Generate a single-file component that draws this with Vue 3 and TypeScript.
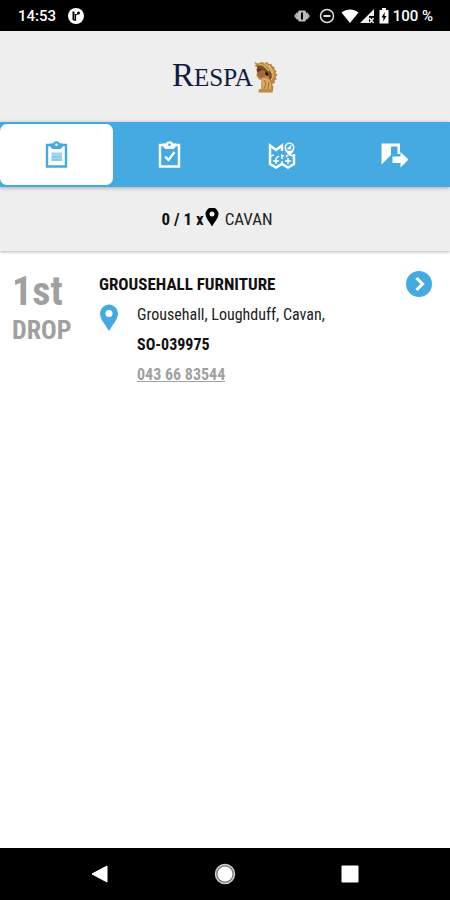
<script setup lang="ts">
import { ref } from 'vue'

type TabId = 'pending' | 'done' | 'map' | 'exit'

interface Drop {
  order: string
  customer: string
  address: string
  reference: string
  phone: string
}

const tabs: { id: TabId; label: string }[] = [
  { id: 'pending', label: 'Pending drops' },
  { id: 'done', label: 'Completed drops' },
  { id: 'map', label: 'Route map' },
  { id: 'exit', label: 'Sign out' },
]

const activeTab = ref<TabId>('pending')

const drops: Drop[] = [
  {
    order: '1st',
    customer: 'GROUSEHALL FURNITURE',
    address: 'Grousehall, Loughduff, Cavan,',
    reference: 'SO-039975',
    phone: '043 66 83544',
  },
]
</script>

<template>
  <div class="screen">
    <div class="status-bar">
      <div class="status-left">
        <span>14:53</span>
        <svg width="16" height="16" viewBox="0 0 16 16" aria-hidden="true">
          <circle cx="8" cy="8" r="8" fill="#fff" />
          <path d="M5.500 3.500v8.500" stroke="#000" stroke-width="2" fill="none" />
          <path d="M5.500 12.200h2V6.500h2" stroke="#000" stroke-width="1.200" fill="none" />
          <circle cx="10.500" cy="5" r="1.500" fill="#000" />
        </svg>
      </div>
      <div class="status-right">
        <svg width="16" height="16" viewBox="0 0 16 16" aria-hidden="true">
          <path d="M0 8 3 4v8zM16 8l-3-4v8z" fill="#aaa" />
          <path d="M5 2.500h6l2 3v5l-2 3H5l-2-3v-5z" fill="#bbb" />
          <path d="M8 4.500v7" stroke="#000" stroke-width="2" />
        </svg>
        <svg class="dnd" width="16" height="16" viewBox="0 0 16 16" aria-hidden="true">
          <circle cx="8" cy="8" r="6.500" fill="none" stroke="#ddd" stroke-width="1.500" />
          <path d="M4.500 8h7" stroke="#ddd" stroke-width="2" />
        </svg>
        <svg class="wifi" width="18" height="16" viewBox="0 0 18 16" aria-hidden="true">
          <path d="M.5 4.500C5.500.4 12.500.4 17.500 4.500L9 15z" fill="#fff" />
        </svg>
        <svg width="16" height="16" viewBox="0 0 16 16" aria-hidden="true">
          <path d="M15 1v7h-5v7H1z" fill="#eee" />
          <path d="m10.500 10 4 5m0-5-4 5" stroke="#eee" stroke-width="1.500" />
        </svg>
        <svg class="battery" width="10" height="16" viewBox="0 0 10 16" aria-hidden="true">
          <path d="M3 0h4v2h2.500v13.500h-9V2H3z" fill="#fff" />
          <path d="M5.800 4 2.500 9.500h2L4.200 13.500 7.500 8h-2z" fill="#000" />
        </svg>
        <span>100 %</span>
      </div>
    </div>

    <header class="brand">
      <h1><span class="initial">R</span>ESPA</h1>
      <svg width="25" height="32" viewBox="0 0 25 32" aria-hidden="true">
        <path d="M1 1l4 1.500L8 1l4 1 2-1 2 2 2.500 0 .5 2 2.500 1 0 2.500 2 1.500-1 2 2 2-2 2 1.500 2-2.500 1.500.5 2.500-3 1 1.500 3-1 5.500H5.500l1-3 2-1-.5-5 1-3-3.500-1.500L5 17l-1.500-2L4 11 3 8l3-1.500L1 5l2-1z" fill="#b98743" />
        <path d="M4 5l5-1 5 3 4 4 1 6-2 2-2-5-4-4-4-1-3 2z" fill="#765026" />
        <path d="M6 3l5 2 5 5M11 2l5 4 3 6M16 4l4 7M20 9l0 7M21 14l-3 5" stroke="#dfb66e" stroke-width="1.200" fill="none" />
        <path d="M5 10l4-1 3 3 0 3-3 2-3-1-2-3z" fill="#a56a3b" />
        <path d="M8.500 17l5 0 4 3 1 10H8l2-4-2-4z" fill="#d8aa63" />
        <path d="M11 19l2 4-2 5M16 21l-1 7M7 14l3 1" stroke="#9b6c34" stroke-width="1" fill="none" />
        <path d="M12 11l3 1 0 3-2.500-1z" fill="#23170f" />
        <path d="M4 11l2-3 3 0-2 2z" fill="#4b2a18" />
        <path d="M6 28h13v2.500H5.500z" fill="#bf904c" />
      </svg>
    </header>

    <nav class="tabs" aria-label="Sections">
      <button
        v-for="tab in tabs"
        :key="tab.id"
        type="button"
        class="tab"
        :class="{ active: activeTab === tab.id }"
        :aria-label="tab.label"
        :aria-pressed="activeTab === tab.id"
        @click="activeTab = tab.id"
      >
        <svg v-if="tab.id === 'pending' || tab.id === 'done'" width="24" height="28" viewBox="0 0 24 28" aria-hidden="true">
          <path d="M3 4h19v21.500H3z" fill="none" stroke="currentColor" stroke-width="2.400" />
          <path d="M6 2.500h3c1-3 6-3 7 0h3v3L16.500 8h-8L6 5.500z" fill="currentColor" />
          <circle class="clip-hole" cx="12.500" cy="3.800" r="1.300" />
          <g v-if="tab.id === 'pending'">
            <path d="M7.500 11.500H18V20H7.500z" fill="currentColor" opacity=".5" />
            <path d="M7.500 16H18M7.500 19H18" stroke="currentColor" stroke-width="1.200" opacity=".4" />
          </g>
          <path v-else d="m8 15.500 3.500 3.500 6-8" fill="none" stroke="currentColor" stroke-width="2.200" />
        </svg>
        <svg v-else-if="tab.id === 'map'" width="30" height="28" viewBox="0 0 30 28" aria-hidden="true">
          <path d="M16 10V4.500L10 9 4 4.500V23l6 3.500 6-3.500 6 3.500 6-3.500V13" fill="none" stroke="currentColor" stroke-width="2.400" />
          <path d="M5 15l3-1m2 3 3-2m2-1 3 1m2 1 2-2m2 0 3 1M7 20h6M10 17v6M19 20h6M22 17v6M16 15v3M16 20v3" fill="none" stroke="currentColor" stroke-width="1.500" />
          <path d="M23.500 15C20 11.500 18.500 9 18.500 6.500a5 5 0 0 1 10 0c0 2.500-1.500 5-5 8.500z" fill="currentColor" />
          <circle cx="23.500" cy="6.500" r="3.400" fill="#45aae1" />
          <path d="m21.500 8 4-3.500M23 8.500l2-2" fill="none" stroke="currentColor" stroke-width="1.200" />
        </svg>
        <svg v-else width="28" height="28" viewBox="0 0 28 28" aria-hidden="true">
          <path d="M1.500 2.500H20V13h-2.500V5.500H11V14l-9.500 9.500z" fill="currentColor" />
          <path d="M12.500 15.500h8V11l8 7.500-8 8v-4.500h-8z" fill="currentColor" />
        </svg>
      </button>
    </nav>

    <section class="summary">
      <strong>0 / 1 x</strong>
      <svg width="14" height="20" viewBox="0 0 14 20" aria-hidden="true">
        <path fill-rule="evenodd" d="M7 18.500C4 13 .5 10 .5 6a6.500 6.500 0 0 1 13 0C13.500 10 10 13 7 18.500zM7 3.500a2.500 2.500 0 1 0 0 5 2.500 2.500 0 0 0 0-5z" />
      </svg>
      <span>CAVAN</span>
    </section>

    <main>
      <article v-for="drop in drops" :key="drop.reference" class="drop">
        <div class="sequence">
          <div class="order">{{ drop.order }}</div>
          <div class="caption">DROP</div>
        </div>
        <div class="details">
          <h2>{{ drop.customer }}</h2>
          <div class="location">
            <svg width="20" height="28" viewBox="0 0 20 28" aria-hidden="true">
              <path fill="#45aae1" fill-rule="evenodd" d="M10 27C5 19 1 14.500 1 9.500a9 9 0 0 1 18 0c0 5-4 9.500-9 17.500zM10 6a3.500 3.500 0 1 0 0 7 3.500 3.500 0 0 0 0-7z" />
            </svg>
            <div class="lines">
              <p>{{ drop.address }}</p>
              <strong>{{ drop.reference }}</strong>
              <a :href="'tel:' + drop.phone.replace(/ /g, '')">{{ drop.phone }}</a>
            </div>
          </div>
        </div>
        <button type="button" class="open" :aria-label="'Open ' + drop.customer">
          <svg width="26" height="26" viewBox="0 0 26 26" aria-hidden="true">
            <circle cx="13" cy="13" r="13" fill="#45aae1" />
            <path d="m10.500 7 6 6-6 6" fill="none" stroke="#fff" stroke-width="3" />
          </svg>
        </button>
      </article>
    </main>

    <footer class="system-nav">
      <button type="button" aria-label="Back">
        <svg width="22" height="22" viewBox="0 0 22 22" aria-hidden="true"><path d="M18 3v16L3 11z" fill="#fff" stroke="#fff" stroke-linejoin="round" /></svg>
      </button>
      <button type="button" aria-label="Home">
        <svg width="22" height="22" viewBox="0 0 22 22" aria-hidden="true">
          <circle cx="11" cy="11" r="9.500" fill="#777" stroke="#ccc" stroke-width="1.500" />
          <circle cx="11" cy="11" r="7.500" fill="#fff" />
        </svg>
      </button>
      <button type="button" aria-label="Recent apps">
        <svg width="22" height="22" viewBox="0 0 22 22" aria-hidden="true"><rect x="2.500" y="2.500" width="17" height="17" rx="1" fill="#fff" /></svg>
      </button>
    </footer>
  </div>
</template>

<style>
body {
  margin: 0;
}
</style>

<style scoped>
.screen {
  min-height: 100vh;
  display: flex;
  flex-direction: column;
  background: #fff;
  color: #222;
  font-family: "Roboto Condensed", "Liberation Sans Narrow", Roboto, sans-serif;
}

svg {
  display: block;
  flex: none;
}

button {
  padding: 0;
  border: 0;
  background: none;
  cursor: pointer;
}

h1,
h2,
p {
  margin: 0;
}

.status-bar {
  height: 31px;
  padding: 0 17px 0 18px;
  box-sizing: border-box;
  display: flex;
  align-items: center;
  justify-content: space-between;
  background: #000;
  color: #fff;
  font: 500 15px/16px Roboto, sans-serif;
}

.status-left,
.status-right {
  display: flex;
  align-items: center;
}

.status-left {
  gap: 12px;
}

.dnd {
  margin-left: 9px;
}

.wifi {
  margin-left: 6px;
}

.battery {
  margin: 0 4px;
}

.brand {
  height: 91px;
  display: flex;
  align-items: center;
  justify-content: center;
  background: #eee;
}

.brand h1 {
  color: #101b3f;
  font: 400 25px/36px "Liberation Serif", serif;
}

.brand .initial {
  font-size: 33px;
}

.tabs {
  position: relative;
  display: grid;
  grid-template-columns: repeat(4, 1fr);
  padding: 2px 0;
  background: #45aae1;
  box-shadow: 0 1px 4px rgba(0, 0, 0, 0.3);
}

.tab {
  height: 61px;
  display: flex;
  align-items: center;
  justify-content: center;
  border-radius: 7px;
  color: #fff;
}

.tab.active {
  background: #fff;
  color: #45aae1;
}

.clip-hole {
  fill: #45aae1;
}

.tab.active .clip-hole {
  fill: #fff;
}

.summary {
  height: 64px;
  display: flex;
  align-items: center;
  justify-content: center;
  background: #eee;
  box-shadow: 0 1px 3px rgba(0, 0, 0, 0.3);
  font-size: 17px;
  line-height: 20px;
  padding-right: 16px;
}

.summary strong {
  margin-right: 1px;
  color: #111;
}

.summary svg {
  margin-bottom: 2px;
}

.summary span {
  margin-left: 6px;
}

main {
  flex: 1;
}

.drop {
  display: flex;
  align-items: flex-start;
  padding: 20px 18px 12px 12px;
}

.sequence {
  flex: none;
  width: 87px;
  padding-top: 1px;
  color: #a0a0a0;
  font-weight: 700;
}

.order {
  font-size: 40px;
  line-height: 40px;
}

.caption {
  font-size: 26px;
  line-height: 36px;
}

.details {
  flex: 1;
}

h2 {
  color: #111;
  font-size: 17px;
  line-height: 26px;
}

.location {
  display: flex;
  gap: 18px;
  padding-top: 3px;
}

.location svg {
  margin-top: 4px;
}

.lines {
  display: flex;
  flex-direction: column;
  align-items: flex-start;
  font-size: 16px;
  line-height: 30px;
}

.lines strong {
  color: #111;
}

.lines a {
  color: #a0a0a0;
  font-weight: 700;
}

.system-nav {
  height: 52px;
  display: grid;
  grid-template-columns: repeat(3, 125px);
  justify-content: center;
  align-items: center;
  justify-items: center;
  background: #000;
}
</style>
